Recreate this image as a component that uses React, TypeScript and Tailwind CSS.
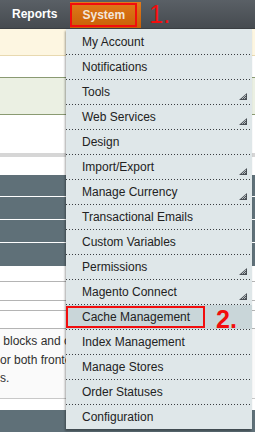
import { Fragment } from "react";

const items = [
  { label: "My Account" },
  { label: "Notifications" },
  { label: "Tools", sub: true },
  { label: "Web Services", sub: true },
  { label: "Design" },
  { label: "Import/Export", sub: true },
  { label: "Manage Currency", sub: true },
  { label: "Transactional Emails" },
  { label: "Custom Variables" },
  { label: "Permissions", sub: true },
  { label: "Magento Connect", sub: true },
  { label: "Cache Management", active: true },
  { label: "Index Management" },
  { label: "Manage Stores" },
  { label: "Order Statuses" },
  { label: "Configuration" },
];

const SubArrow = () => (
  <svg
    className="absolute right-[4px] bottom-[3px]"
    width="9"
    height="8"
    viewBox="0 0 9 8"
  >
    <path d="M8 0 L8 7 L0 7 Z" fill="#4a4f55" />
    <path d="M3 6 L7 2 M5 6 L7 4" stroke="#cfd8db" strokeWidth="0.8" />
  </svg>
);

const App = () => {
  return (
    <div className="relative w-[255px] h-[432px] overflow-hidden bg-white font-['Liberation_Sans',Arial,sans-serif]">
      {/* top nav */}
      <div className="flex h-[29px] items-stretch bg-gradient-to-b from-[#5a6066] to-[#464b50] border-b border-[#3a3e42]">
        <div className="flex items-center pl-[12px] pr-[13px] text-[12px] font-bold text-white">
          Reports
        </div>
        <div className="flex items-center w-[71px] mt-[2px] bg-gradient-to-b from-[#e07a1a] to-[#c85f05]">
          <div className="flex items-center justify-center w-[67px] h-[24px] border-[2px] border-[#f20d0d] text-[12px] font-bold text-[#f3e6da]">
            System
          </div>
        </div>
        <div className="flex items-center pl-[8px] text-[25px] leading-none text-[#f20d0d]">
          1.
        </div>
      </div>

      {/* page content behind the menu */}
      <div className="flex flex-col">
        <div className="h-[27px] bg-[#fdf6e1] border-b border-[#e8d9b0]" />
        <div className="h-[21px] bg-white" />
        <div className="h-[38px] bg-[#ebf0e3] border-y border-[#8a9a72]" />
        <div className="h-[38px] bg-white" />
        <div className="h-[4px] bg-[#d6d6d6]" />
        <div className="h-[18px] bg-white" />
        <div className="flex flex-col gap-[1px] bg-white h-[91px]">
          <div className="h-[21px] bg-[#5f7078]" />
          <div className="h-[22px] bg-[#5f7078]" />
          <div className="h-[22px] bg-[#5f7078]" />
          <div className="h-[23px] bg-[#5f7078]" />
        </div>
        <div className="h-[16px] bg-white border-b border-[#b4b4b4]" />
        <div className="h-[19px] bg-white border-b border-[#b4b4b4]" />
        <div className="h-[10px] bg-white border-b border-[#b4b4b4]" />
        <div className="h-[18px] bg-white border-b border-[#b4b4b4]" />
        <div className="h-[70px] bg-[#fafafa] border-b border-[#c8c8c8] pt-[3px] text-[12px] leading-[18.5px] text-[#2f2f2f]">
          <div className="whitespace-nowrap">&nbsp;blocks and other</div>
          <div className="whitespace-nowrap">or both frontend</div>
          <div>s.</div>
        </div>
        <div className="h-[11px] bg-white" />
        <div className="h-[30px] bg-[#5f7078]" />
      </div>

      {/* dropdown menu */}
      <div className="absolute left-[66px] top-[29px] w-[186px] bg-[#dfe7e9] shadow-[-1px_2px_2px_rgba(0,0,0,0.35)]">
        {items.map((it, i) => (
          <Fragment key={it.label}>
            {i > 0 && (
              <div className="h-[1px] bg-[repeating-linear-gradient(90deg,#3a3e42_0_1px,transparent_1px_3px)]" />
            )}
            <div
              className={`relative flex ${i > 0 ? "h-[24px]" : "h-[25px]"} items-center text-[12px] text-[#222] ${
                it.active ? "bg-[#c9d6d9]" : ""
              }`}
            >
              {it.active ? (
                <>
                  <div className="flex h-[22px] w-[139px] items-center border-[2px] border-[#f20d0d] pl-[14px]">
                    {it.label}
                  </div>
                  <div className="ml-[11px] mt-[4px] text-[25px] font-bold leading-none text-[#f20d0d]">
                    2.
                  </div>
                </>
              ) : (
                <span className="pl-[16px]">{it.label}</span>
              )}
              {it.sub && <SubArrow />}
            </div>
          </Fragment>
        ))}
      </div>
    </div>
  );
};

export default App;
